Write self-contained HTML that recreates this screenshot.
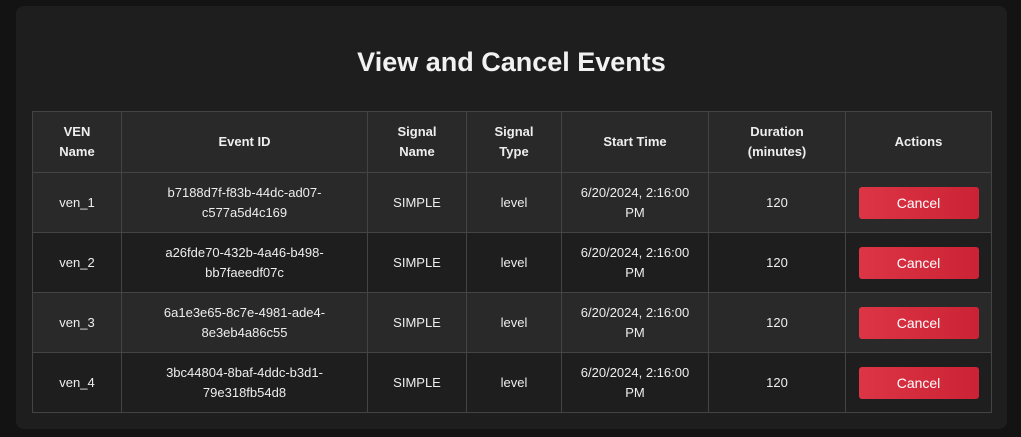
<!DOCTYPE html>
<html><head><style>
html,body{margin:0;padding:0;background:#131313;width:1021px;height:437px;overflow:hidden;font-family:"Liberation Sans",sans-serif;color:#eee}
.card{position:absolute;left:16px;top:6px;width:991px;height:423px;background:#1e1e1e;border-radius:8px}
h1{position:absolute;left:0;right:0;top:41px;margin:0;text-align:center;font-size:27px;font-weight:bold;color:#f2f2f2}
table{position:absolute;left:16px;top:105px;border-collapse:collapse;table-layout:fixed;width:959px;font-size:13px}
td,th{border:1px solid #444;text-align:center;padding:0 8px;line-height:20px;height:60px;box-sizing:border-box}
th{background:#292929;font-weight:bold;height:61px}
tr.a td{background:#292929}
tr.b td{background:#1e1e1e}
.btn{display:inline-block;width:120px;height:32px;line-height:32px;border-radius:3px;background:linear-gradient(90deg,#dc3545,#cc2235);color:#fff;font-size:14px}
</style></head><body>
<div class="card">
<h1>View and Cancel Events</h1>
<table>
<colgroup><col style="width:89px"><col style="width:246px"><col style="width:99px"><col style="width:95px"><col style="width:147px"><col style="width:137px"><col style="width:146px"></colgroup>
<tr><th>VEN<br>Name</th><th>Event ID</th><th>Signal<br>Name</th><th>Signal<br>Type</th><th>Start Time</th><th>Duration<br>(minutes)</th><th>Actions</th></tr>
<tr class="a"><td>ven_1</td><td>b7188d7f-f83b-44dc-ad07-<br>c577a5d4c169</td><td>SIMPLE</td><td>level</td><td>6/20/2024, 2:16:00<br>PM</td><td>120</td><td><span class="btn">Cancel</span></td></tr>
<tr class="b"><td>ven_2</td><td>a26fde70-432b-4a46-b498-<br>bb7faeedf07c</td><td>SIMPLE</td><td>level</td><td>6/20/2024, 2:16:00<br>PM</td><td>120</td><td><span class="btn">Cancel</span></td></tr>
<tr class="a"><td>ven_3</td><td>6a1e3e65-8c7e-4981-ade4-<br>8e3eb4a86c55</td><td>SIMPLE</td><td>level</td><td>6/20/2024, 2:16:00<br>PM</td><td>120</td><td><span class="btn">Cancel</span></td></tr>
<tr class="b"><td>ven_4</td><td>3bc44804-8baf-4ddc-b3d1-<br>79e318fb54d8</td><td>SIMPLE</td><td>level</td><td>6/20/2024, 2:16:00<br>PM</td><td>120</td><td><span class="btn">Cancel</span></td></tr>
</table>
</div>
</body></html>
